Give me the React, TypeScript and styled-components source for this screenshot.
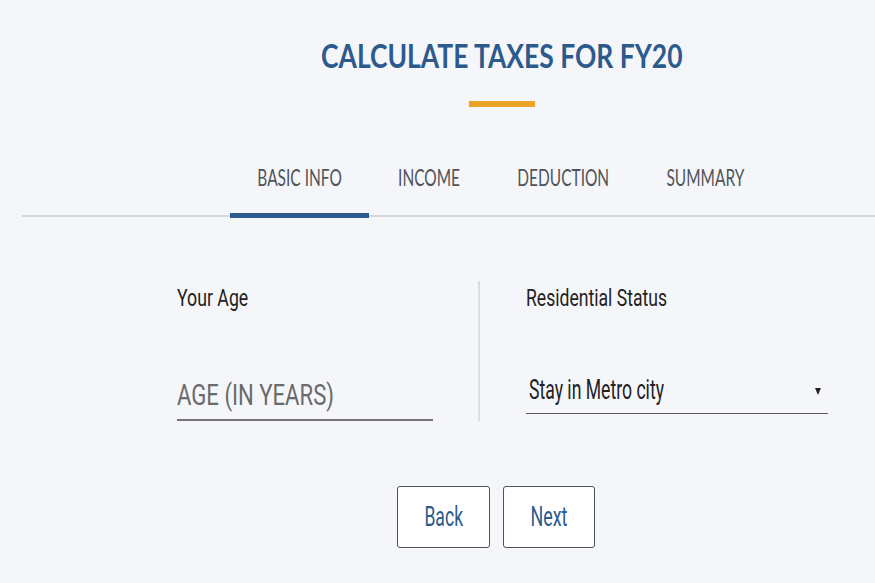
import React from "react";
import styled, { createGlobalStyle } from "styled-components";

const GlobalStyle = createGlobalStyle`
  html, body {
    margin: 0;
    padding: 0;
    background: #f5f6fa;
  }
  body {
    font-family: "Roboto", "Liberation Sans", sans-serif;
    overflow: hidden;
  }
`;

const Page = styled.div`
  width: 875px;
  height: 583px;
  background: #f5f6fa;
  display: flex;
  flex-direction: column;
`;

const Squeeze = styled.span<{ $s: number; $origin?: string }>`
  display: inline-block;
  white-space: nowrap;
  transform: scaleX(${(p) => p.$s});
  transform-origin: ${(p) => p.$origin ?? "left center"};
`;

const Header = styled.header`
  margin-left: 230px;
  width: 544px;
  padding-top: 40px;
  display: flex;
  flex-direction: column;
  align-items: center;
`;

const Title = styled.h1`
  margin: 0;
  font-family: "Lato", "Liberation Sans", sans-serif;
  font-weight: 700;
  font-size: 32px;
  line-height: 32px;
  color: #2d5a8c;
  white-space: nowrap;
`;

const Accent = styled.div`
  margin-top: 29px;
  width: 66px;
  height: 6px;
  background: #e9a325;
`;

const TabBar = styled.nav`
  margin-left: 22px;
  margin-top: 58px;
  padding-left: 208px;
  display: flex;
  border-bottom: 2px solid #d6d7db;
`;

const Tab = styled.div<{ $w: number; $active?: boolean }>`
  position: relative;
  width: ${(p) => p.$w}px;
  padding-bottom: 26px;
  display: flex;
  justify-content: center;
  font-family: "Lato", "Liberation Sans", sans-serif;
  font-size: 24px;
  line-height: 24px;
  color: #505459;
  &::after {
    content: "";
    display: ${(p) => (p.$active ? "block" : "none")};
    position: absolute;
    left: 0;
    right: 0;
    bottom: -3px;
    height: 5px;
    background: #2c5a8a;
  }
`;

const FormRow = styled.section`
  margin-top: 64px;
  padding-left: 177px;
  display: flex;
  align-items: stretch;
`;

const Column = styled.div<{ $w: number }>`
  width: ${(p) => p.$w}px;
  padding-top: 6px;
  display: flex;
  flex-direction: column;
`;

const Divider = styled.div`
  width: 1.5px;
  margin: 0 46px 0 45px;
  background: #dcdde1;
`;

const FieldLabel = styled.label`
  font-family: "Roboto", "Liberation Sans", sans-serif;
  font-size: 23px;
  line-height: 23px;
  color: #222;
`;

const TextField = styled.div`
  margin-top: 70px;
  padding-bottom: 9px;
  border-bottom: 2px solid #767676;
  font-family: "Roboto", "Liberation Sans", sans-serif;
  font-size: 30px;
  line-height: 30px;
  color: #6a6a6a;
`;

const SelectField = styled.div`
  margin-top: 67px;
  padding: 0 7px 9px 3px;
  border-bottom: 1.5px solid #5a5a5a;
  display: flex;
  align-items: center;
  justify-content: space-between;
  font-family: "Roboto", "Liberation Sans", sans-serif;
  font-size: 27px;
  line-height: 27px;
  color: #222;
`;

const Caret = styled.svg`
  width: 6px;
  height: 7px;
  margin-top: 1px;
`;

const Actions = styled.div`
  margin-top: 65px;
  padding-left: 397px;
  display: flex;
  gap: 13px;
`;

const Button = styled.button<{ $w: number }>`
  width: ${(p) => p.$w}px;
  height: 62px;
  padding: 0;
  background: #ffffff;
  border: 1.5px solid #4d5257;
  border-radius: 3px;
  display: flex;
  align-items: center;
  justify-content: center;
  font-family: "Roboto", "Liberation Sans", sans-serif;
  font-size: 28px;
  line-height: 28px;
  color: #2d5a8c;
  cursor: pointer;
`;

const tabs = [
  { label: "BASIC INFO", w: 139, active: true },
  { label: "INCOME", w: 120 },
  { label: "DEDUCTION", w: 148 },
  { label: "SUMMARY", w: 137 },
];

export default function App() {
  return (
    <>
      <GlobalStyle />
      <Page>
        <Header>
          <Title>
            <Squeeze $s={0.826} $origin="center">CALCULATE TAXES FOR FY20</Squeeze>
          </Title>
          <Accent />
        </Header>
        <TabBar>
          {tabs.map((t) => (
            <Tab key={t.label} $w={t.w} $active={t.active}>
              <Squeeze $s={0.645} $origin="center">{t.label}</Squeeze>
            </Tab>
          ))}
        </TabBar>
        <FormRow>
          <Column $w={256}>
            <FieldLabel>
              <Squeeze $s={0.77}>Your Age</Squeeze>
            </FieldLabel>
            <TextField>
              <Squeeze $s={0.737}>AGE (IN YEARS)</Squeeze>
            </TextField>
          </Column>
          <Divider />
          <Column $w={302}>
            <FieldLabel>
              <Squeeze $s={0.765}>Residential Status</Squeeze>
            </FieldLabel>
            <SelectField>
              <Squeeze $s={0.652}>Stay in Metro city</Squeeze>
              <Caret viewBox="0 0 6 7">
                <path d="M0 0 H6 L3 7 Z" fill="#222" />
              </Caret>
            </SelectField>
          </Column>
        </FormRow>
        <Actions>
          <Button $w={93}>
            <Squeeze $s={0.63} $origin="center">Back</Squeeze>
          </Button>
          <Button $w={92}>
            <Squeeze $s={0.64} $origin="center">Next</Squeeze>
          </Button>
        </Actions>
      </Page>
    </>
  );
}
